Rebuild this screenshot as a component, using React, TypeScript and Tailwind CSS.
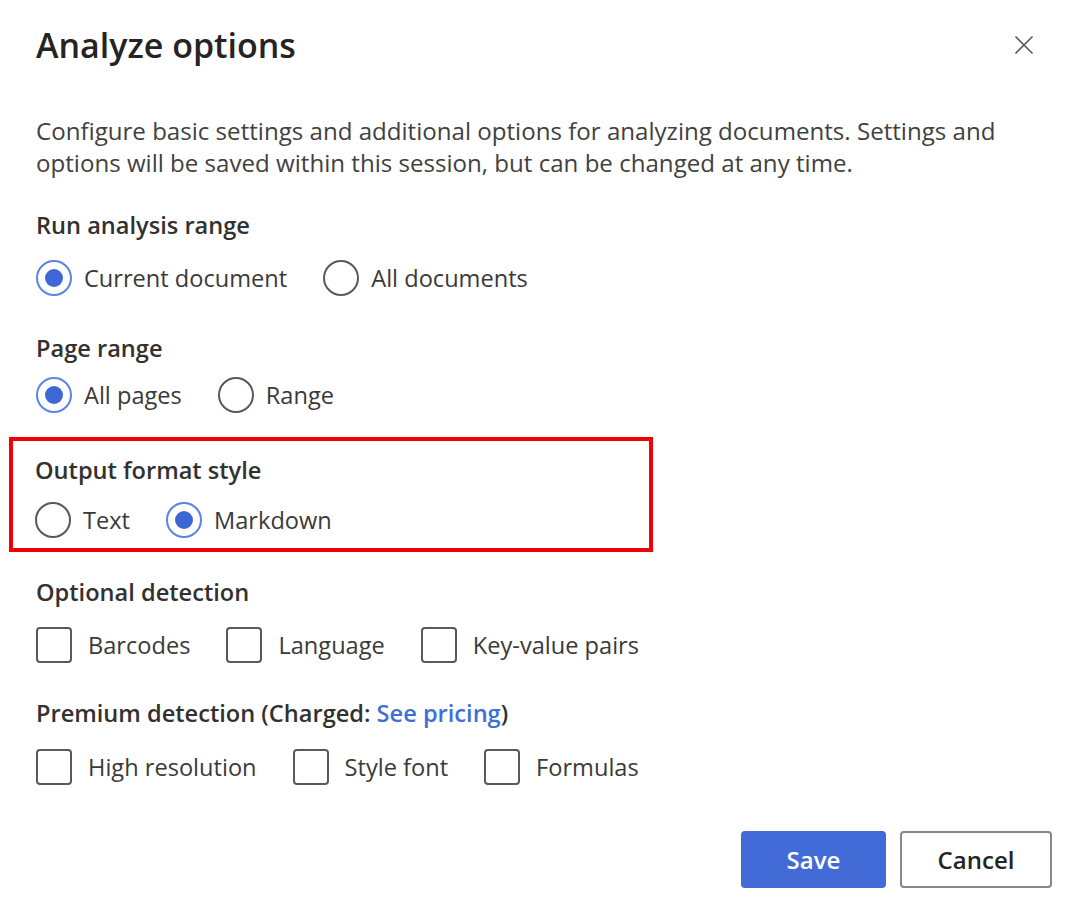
import { X } from 'lucide-react';

type Opt = { label: string; checked?: boolean };

const Radio = ({ label, checked }: Opt) => (
  <label className="flex items-center gap-[12px]">
    <span
      className={`flex h-[36px] w-[36px] items-center justify-center rounded-full border-[2px] ${
        checked ? 'border-[#5b84e6]' : 'border-[#5a5858]'
      }`}
    >
      {checked && <span className="h-[18px] w-[18px] rounded-full bg-[#3d66d7]" />}
    </span>
    <span className="text-[23.6px] leading-[36px] text-[#3b3a39]">{label}</span>
  </label>
);

const Checkbox = ({ label }: Opt) => (
  <label className="flex items-center gap-[16px]">
    <span className="h-[36px] w-[36px] rounded-[4px] border-[2px] border-[#5a5858]" />
    <span className="text-[23.6px] leading-[36px] text-[#3b3a39]">{label}</span>
  </label>
);

const Heading = ({ children, className = '' }: { children: React.ReactNode; className?: string }) => (
  <h3 className={`text-[23.6px] font-semibold leading-[32px] text-[#323130] ${className}`}>{children}</h3>
);

export default function App() {
  return (
    <div
      className="min-h-[920px] w-[1080px] bg-white pl-[36px] pr-[28px]"
      style={{ fontFamily: '"Segoe UI", "Open Sans", sans-serif' }}
    >
      <div className="flex items-center justify-between pt-[25px] pr-[12px]">
        <h2 className="text-[34px] font-semibold leading-[40px] text-[#252423]">Analyze options</h2>
        <X className="h-[32px] w-[32px] text-[#5f5e5c]" strokeWidth={1.3} />
      </div>

      <p className="mt-[50px] text-[24.1px] leading-[32px] text-[#424140]">
        Configure basic settings and additional options for analyzing documents. Settings and
        <br />
        options will be saved within this session, but can be changed at any time.
      </p>

      <Heading className="mt-[30px]">Run analysis range</Heading>
      <div className="mt-[19px] flex gap-[36px]">
        <Radio label="Current document" checked />
        <Radio label="All documents" />
      </div>

      <Heading className="mt-[36px]">Page range</Heading>
      <div className="mt-[13px] flex gap-[36px]">
        <Radio label="All pages" checked />
        <Radio label="Range" />
      </div>

      <div className="-ml-[27px] mt-[24px] w-[644px] border-[4px] border-[#f00000] pb-[10px] pl-[22px] pt-[13px]">
        <Heading>Output format style</Heading>
        <div className="mt-[16px] flex gap-[36px]">
          <Radio label="Text" />
          <Radio label="Markdown" checked />
        </div>
      </div>

      <Heading className="mt-[24px]">Optional detection</Heading>
      <div className="mt-[19px] flex gap-[36px]">
        <Checkbox label="Barcodes" />
        <Checkbox label="Language" />
        <Checkbox label="Key-value pairs" />
      </div>

      <Heading className="mt-[34px]">
        Premium detection (Charged: <span className="text-[#3e6fd9]">See pricing</span>)
      </Heading>
      <div className="mt-[20px] flex gap-[36px]">
        <Checkbox label="High resolution" />
        <Checkbox label="Style font" />
        <Checkbox label="Formulas" />
      </div>

      <div className="mt-[46px] flex justify-end gap-[14px]">
        <button className="h-[57px] w-[145px] rounded-[4px] bg-[#436bd7] text-[24px] font-semibold text-white">
          Save
        </button>
        <button className="h-[57px] w-[152px] rounded-[4px] border-[2px] border-[#8a8886] bg-white text-[24px] font-semibold text-[#252423]">
          Cancel
        </button>
      </div>
    </div>
  );
}
